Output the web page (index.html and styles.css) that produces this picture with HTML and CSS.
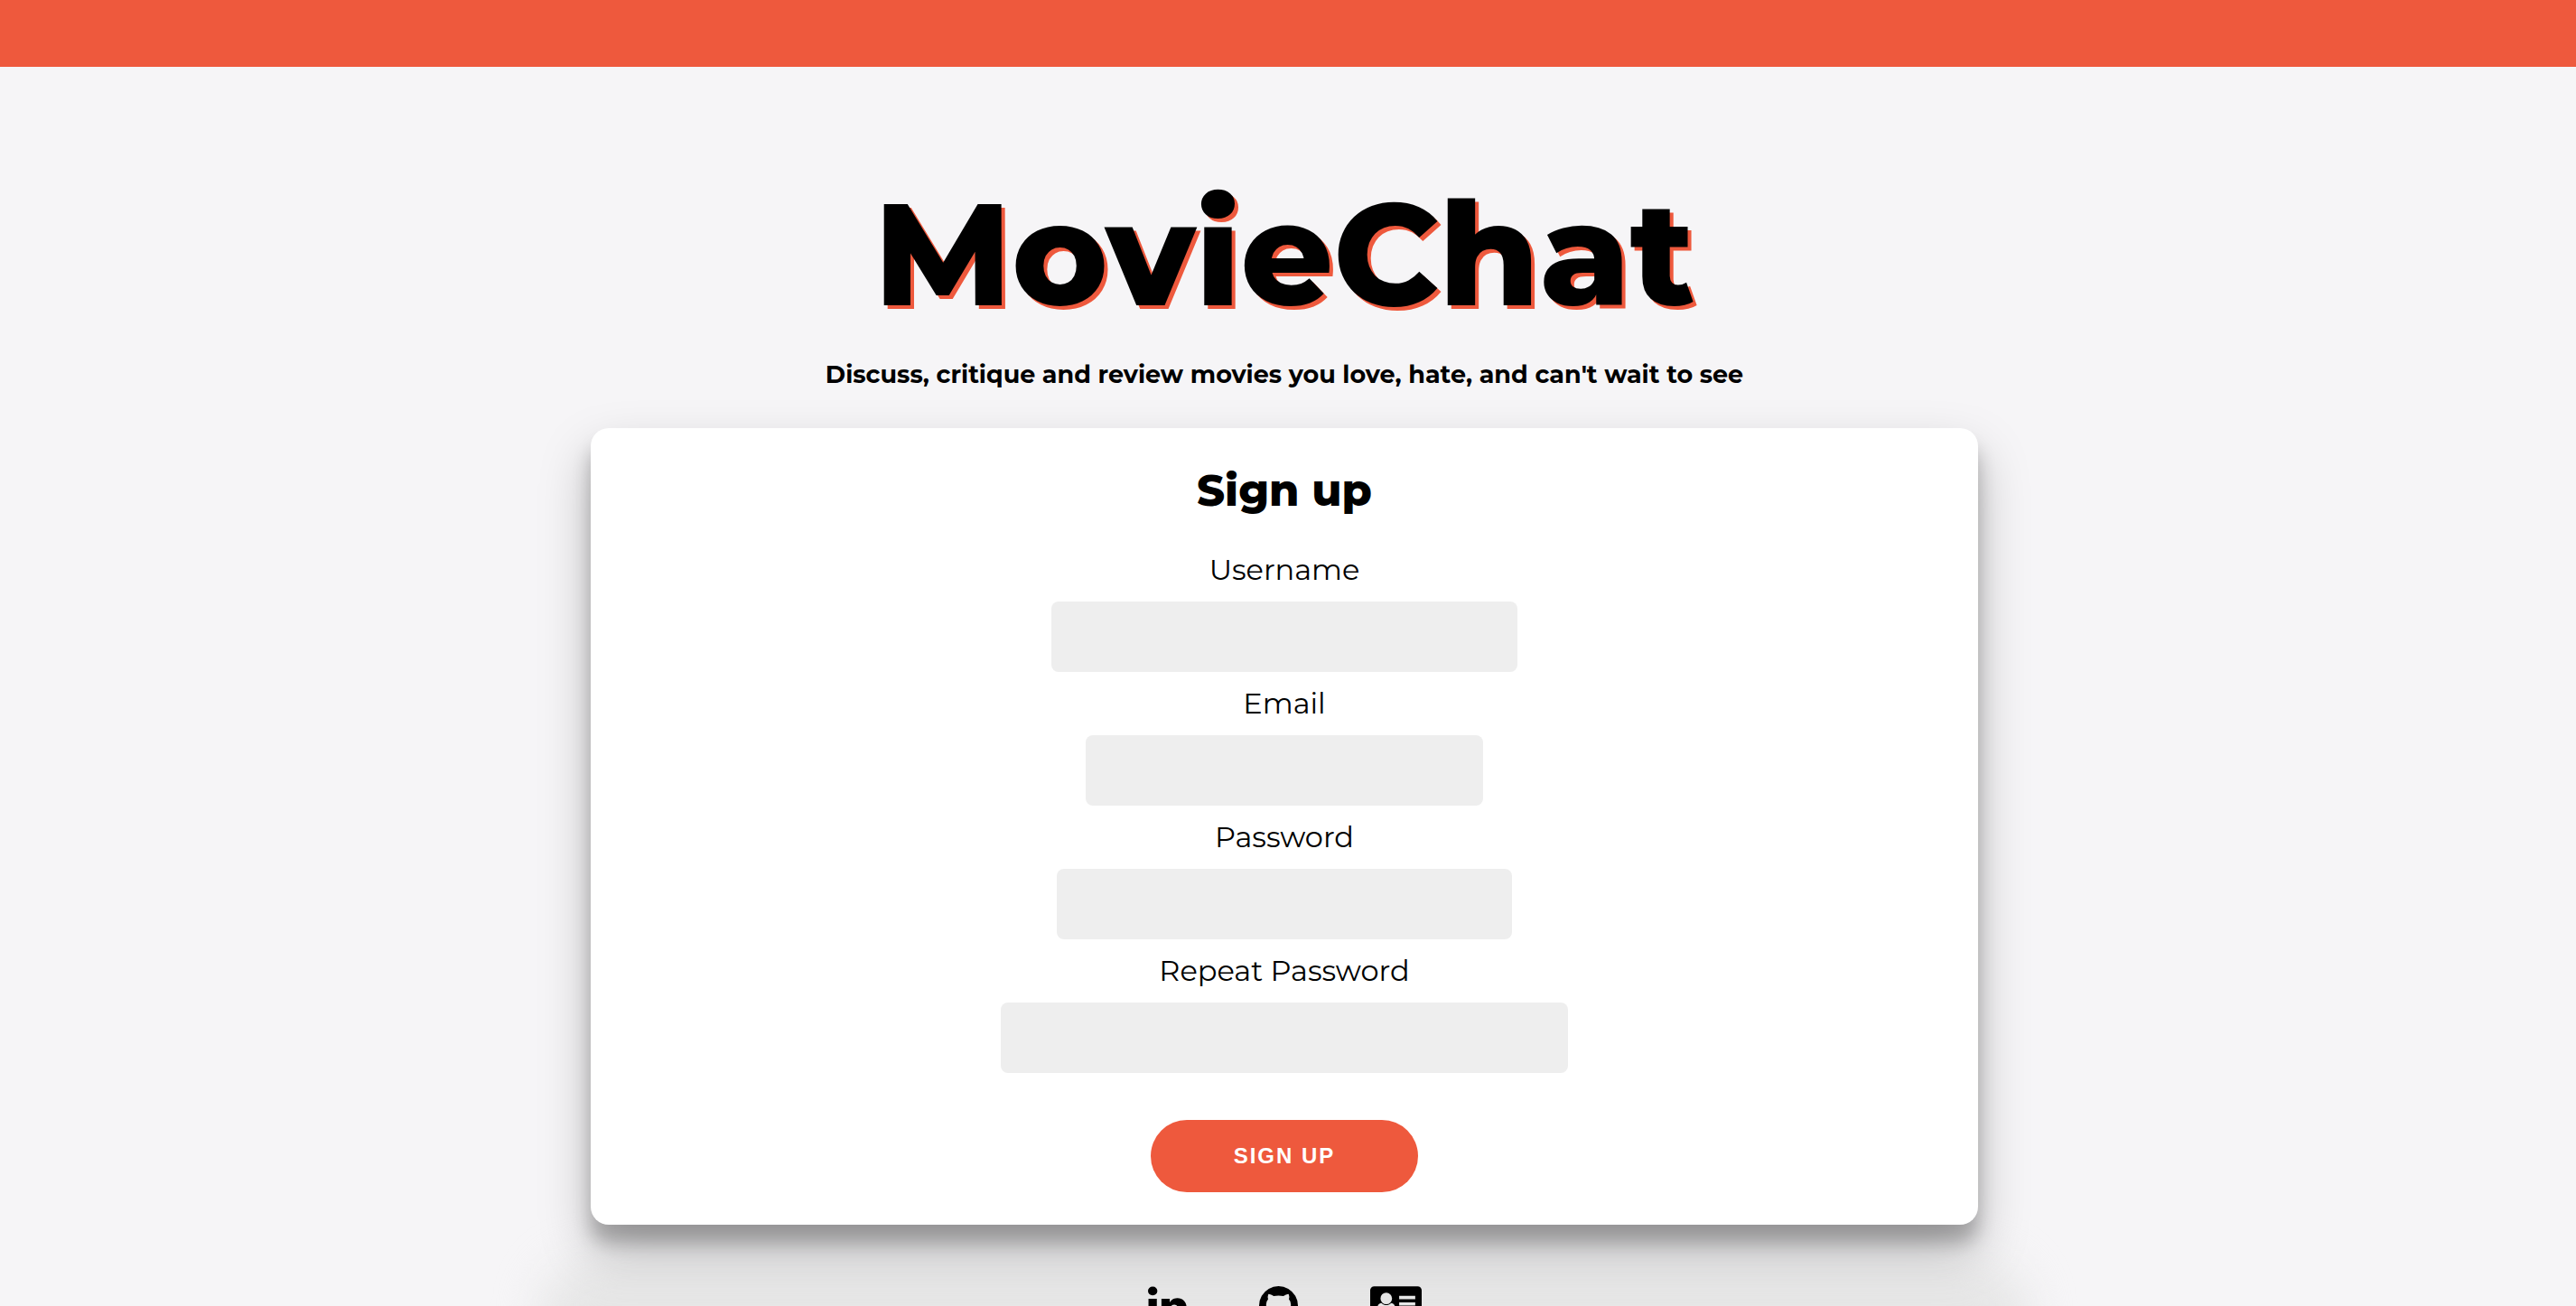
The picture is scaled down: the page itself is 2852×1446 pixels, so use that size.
FILE: index.html
```html
<!DOCTYPE html>
<html lang="en">
<head>
<meta charset="utf-8">
<title>MovieChat</title>
<link rel="stylesheet" href="styles.css">
</head>
<body>
<header class="topbar"></header>
<main class="page">
  <h1 class="brand">MovieChat</h1>
  <p class="tagline">Discuss, critique and review movies you love, hate, and can't wait to see</p>
  <form class="card">
    <h2 class="card-title">Sign up</h2>
    <label class="label" for="username">Username</label>
    <input class="field field-username" id="username" type="text">
    <label class="label" for="email">Email</label>
    <input class="field field-email" id="email" type="email">
    <label class="label" for="password">Password</label>
    <input class="field field-password" id="password" type="password">
    <label class="label" for="repeat">Repeat Password</label>
    <input class="field field-repeat" id="repeat" type="password">
    <button class="submit" type="submit">SIGN UP</button>
  </form>
</main>
<footer class="footer">
  <a class="social" href="#" aria-label="LinkedIn"><svg width="43" height="43" viewBox="128 128 1536 1536"><path d="M477 625v991h-330v-991h330zm21-306q1 73-50.500 122t-135.500 49h-2q-82 0-132-49t-50-122q0-74 51.500-122.500t134.500-48.500 133 48.500 51 122.500zm1166 729v568h-329v-530q0-105-40.500-164.500t-126.500-59.500q-63 0-105.500 34.500t-63.500 85.500q-11 30-11 81v553h-329q2-399 2-647t-1-296l-1-48h329v144h-2q20-32 41-56t56.500-52 87-43.500 114.500-15.500q171 0 275 113.500t104 332.500z"/></svg></a>
  <a class="social" href="#" aria-label="GitHub"><svg width="43" height="43" viewBox="128 128 1536 1536"><path d="M896 128q209 0 385.500 103t279.500 279.500 103 385.500q0 251-146.500 451.500t-378.500 277.500q-27 5-40-7t-13-30q0-3 .5-76.500t.5-134.500q0-97-52-142 57-6 102.500-18t94-39 81-66.500 53-105 20.500-150.500q0-119-79-206 37-91-8-204-28-9-81 11t-92 44l-38 24q-93-26-192-26t-192 26q-16-11-42.500-27t-83.500-38.500-85-13.500q-45 113-8 204-79 87-79 206 0 85 20.500 150t52.500 105 80.500 67 94 39 102.500 18q-39 36-49 103-21 10-45 15t-57 5-65.500-21.500-55.500-62.500q-19-32-48.500-52t-49.500-24l-20-3q-21 0-29 4.500t-5 11.500 9 14 13 12l7 5q22 10 43.500 38t31.500 51l10 23q13 38 44 61.500t67 30 69.500 7 55.500-3.500l23-4q0 38 .5 88.500t.5 54.500q0 18-13 30t-40 7q-232-77-378.500-277.500t-146.500-451.500q0-209 103-385.500t279.500-279.500 385.500-103z"/></svg></a>
  <a class="social" href="#" aria-label="Contact card"><svg width="57" height="43" viewBox="0 0 2048 1536"><path fill-rule="evenodd" d="M160 0h1728a160 160 0 0 1 160 160v1216a160 160 0 0 1-160 160H160A160 160 0 0 1 0 1376V160A160 160 0 0 1 160 0zM640 256a230 230 0 1 0 0 460 230 230 0 0 0 0-460zM448 670c-120 0-192 150-192 350 0 120 70 180 160 180h448c90 0 160-60 160-180 0-200-72-350-192-350-110 110-274 110-384 0zM1152 384h640v128h-640zM1152 640h640v128h-640zM1152 896h640v128h-640z"/></svg></a>
</footer>
</body>
</html>
```
FILE: styles.css
```css
* { box-sizing: border-box; }
html { scrollbar-width: none; }
body { margin: 0; background: #f6f5f7; color: #000; font-family: Montserrat, Inter, sans-serif; }
.topbar { height: 74px; background: #ee593d; }
.page { display: flex; flex-direction: column; align-items: center; padding: 111px 8px 0 0; }
.brand { margin: 0; font-size: 160px; line-height: 192px; font-weight: 800; text-shadow: 4px 4px 0 #ee593d; }
.tagline { margin: 20px 0 0; font-size: 27px; line-height: 36px; font-weight: 750; }
.card { width: 54%; margin-top: 41px; padding: 40px 40px 36px; display: flex; flex-direction: column; align-items: center; background: #fff; border-radius: 20px; box-shadow: 0 28px 56px rgba(0, 0, 0, .25), 0 20px 20px rgba(0, 0, 0, .22); }
.card-title { margin: 0 0 24px; font-size: 48px; line-height: 58px; font-weight: 800; }
.label { margin-top: 15px; font-size: 32px; line-height: 40px; font-weight: 400; }
.field { height: 78px; margin-top: 15px; padding: 24px 30px; border: 0; border-radius: 8px; background: #eee; font: inherit; font-size: 28px; }
.field-username { width: 516px; }
.field-email { width: 440px; }
.field-password { width: 504px; }
.field-repeat { width: 628px; }
.submit { margin-top: 52px; width: 296px; height: 80px; border: 0; border-radius: 40px; background: #ee593d; color: #fff; font: bold 24px "Liberation Sans", Arial, sans-serif; letter-spacing: 2px; }
.footer { position: relative; display: flex; justify-content: center; gap: 80px; padding: 68px 8px 60px 0; }
/* soft grey glow behind the social links */
.footer::before { content: ""; position: absolute; z-index: -1; top: 40px; bottom: -40px; left: 21%; right: calc(21% + 8px); border-radius: 60px; background: #e6e6e6; filter: blur(24px); }
.social { display: block; color: #000; }
.social svg { display: block; fill: currentColor; }
```
